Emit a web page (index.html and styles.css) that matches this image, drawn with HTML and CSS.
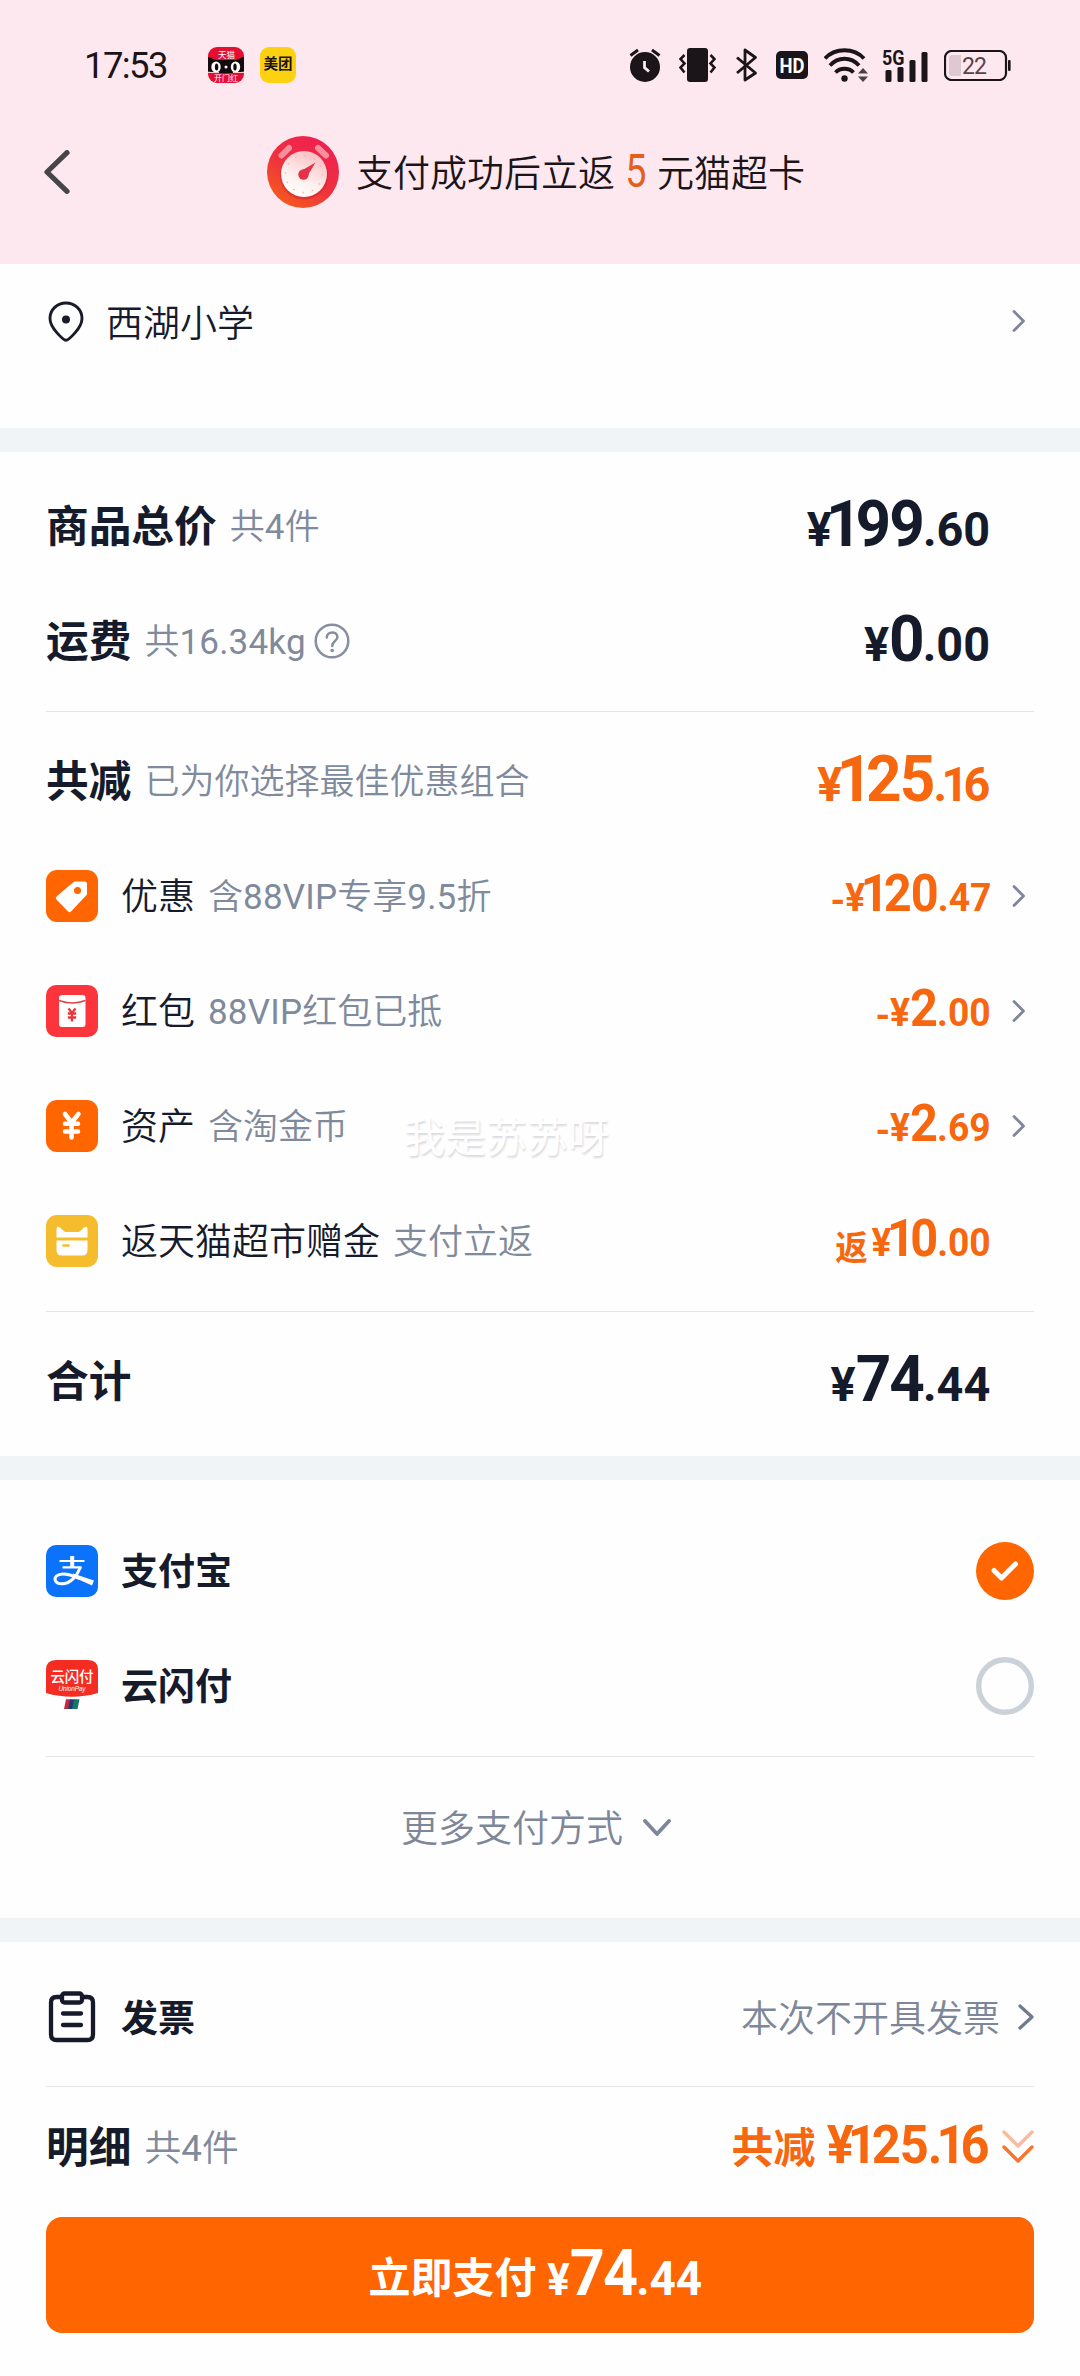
FILE: index.html
```html
<!DOCTYPE html>
<html lang="zh-CN">
<head>
<meta charset="utf-8">
<title>确认支付</title>
<link rel="stylesheet" href="styles.css">
</head>
<body>
<svg class="defs" width="0" height="0">
  <symbol id="chev" viewBox="0 0 14 22"><path d="M2 1.5 11.5 11 2 20.5" fill="none" stroke="#7d8799" stroke-width="2.8" stroke-linecap="round" stroke-linejoin="round"/></symbol>
</svg>
<header class="top">
  <div class="status">
    <span class="clock">17:53</span>
    <svg class="app" viewBox="0 0 36 36" width="36" height="36">
      <defs><clipPath id="tm"><rect width="36" height="36" rx="9"/></clipPath></defs>
      <g clip-path="url(#tm)">
        <rect width="36" height="36" fill="#e30f33"/>
        <path d="M0 10C3 10 5 13 9 13H27C31 13 33 10 36 10V24C26 27 10 27 0 24Z" fill="#120a0c"/>
        <ellipse cx="8" cy="20" rx="4.7" ry="5.6" fill="#fff"/><ellipse cx="8.6" cy="20" rx="1.7" ry="3.6" fill="#120a0c"/>
        <ellipse cx="27.5" cy="20" rx="4.7" ry="5.6" fill="#fff"/><ellipse cx="27" cy="20" rx="1.7" ry="3.6" fill="#120a0c"/>
        <circle cx="18" cy="20" r="1.5" fill="#fff"/>
        <path d="M0 25.5H11M25 25.5H36" stroke="#f6c9cf" stroke-width="1"/>
      </g>
      <text x="18.5" y="10.5" class="tiny" font-size="8.5">天猫</text>
      <text x="18" y="34" class="tiny" font-size="8">开门红</text>
    </svg>
    <span class="meituan">美团</span>
    <div class="signals">
      <svg class="s1" viewBox="629 47 32 34" width="32" height="34">
        <circle cx="645" cy="66" r="15" fill="#1b1418"/><path d="M630.500 54.500 638 49M659.500 54.500 652 49" stroke="#1b1418" stroke-width="3"/>
        <path d="M644.500 60v6.500l4.500 4" fill="none" stroke="#fde8ef" stroke-width="2.800"/>
      </svg>
      <svg class="s2" viewBox="679 47 37 34" width="37" height="34">
        <rect x="687" y="47" width="21" height="34" rx="3" fill="#1b1418"/>
        <path d="M684.500 54l-4 4 4 4.500-4 4 4 5M710.500 54l4 4-4 4.500 4 4-4 5" fill="none" stroke="#1b1418" stroke-width="2.600"/>
      </svg>
      <svg class="s3" viewBox="735 47 23 34" width="23" height="34">
        <path d="M737 56.500 755.500 72 745 79V49l10.500 7.500L737 72" fill="none" stroke="#1b1418" stroke-width="2.800" stroke-linejoin="round"/>
      </svg>
      <svg class="s4" viewBox="776 51 32 28" width="32" height="28">
        <rect x="776" y="51" width="32" height="28" rx="5" fill="#1b1418"/>
        <text x="792" y="72.500" text-anchor="middle" font-family="Roboto, sans-serif" font-weight="700" font-size="21" textLength="25" lengthAdjust="spacingAndGlyphs" fill="#fff">HD</text>
      </svg>
      <svg class="s5" viewBox="824 46 45 34" width="45" height="34">
        <g fill="none" stroke="#1b1418" stroke-width="3.800"><path d="M825 56.500C835 45.500 854 45.500 864 56.500"/><path d="M830 63.500C838 54.500 851 54.500 859 63.500"/><path d="M835.500 70.500C840 65.500 849 65.500 853.500 70.500"/></g>
        <circle cx="844.500" cy="76.500" r="3.200" fill="#1b1418"/>
        <path d="M863 66l5 5.500h-10zM863 80l5-5.500h-10z" fill="#4a4046"/>
      </svg>
      <svg class="s6" viewBox="879 38 50 49" width="50" height="49">
        <text x="882" y="61.500" font-family="Roboto, sans-serif" font-weight="700" font-size="20.500" textLength="22.500" lengthAdjust="spacingAndGlyphs" fill="#1b1418">5G</text>
        <g fill="#1b1418"><rect x="885.500" y="67" width="6" height="12" rx="1.500"/><rect x="897.500" y="64" width="6" height="15" rx="1.500"/><rect x="909.500" y="57" width="6" height="22" rx="1.500"/><rect x="921.500" y="49" width="6" height="30" rx="1.500"/></g>
      </svg>
      <svg class="s7" viewBox="944 49 67 31" width="67" height="31">
        <rect x="945" y="50" width="61" height="29" rx="6.500" fill="none" stroke="#1b1418" stroke-width="2.200"/>
        <path d="M949 57q0-3 3-3h9v21h-9q-3 0-3-3z" fill="#dfc8d1"/>
        <rect x="1008" y="59" width="2.600" height="11" rx="1" fill="#1b1418"/>
        <text x="974.500" y="72.800" text-anchor="middle" font-family="Roboto, sans-serif" font-size="23" textLength="25" fill="#54434c">22</text>
      </svg>
    </div>
  </div>
  <div class="nav">
    <svg class="back" viewBox="0 0 26 44" width="26" height="44"><path d="M23 2.700 3 22 23 41.300" fill="none" stroke="#45454a" stroke-width="5.200" stroke-linecap="round" stroke-linejoin="round"/></svg>
    <svg class="gauge" viewBox="0 0 72 72" width="72" height="72">
      <defs>
        <linearGradient id="g1" x1=".8" y1=".1" x2=".25" y2=".95"><stop offset="0" stop-color="#f0204f"/><stop offset=".5" stop-color="#ee3040"/><stop offset="1" stop-color="#f4581f"/></linearGradient>
        <linearGradient id="g2" x1=".8" y1="0" x2=".3" y2="1"><stop offset="0" stop-color="#fbb9bf"/><stop offset=".65" stop-color="#fdf1ee"/><stop offset="1" stop-color="#fff"/></linearGradient>
      </defs>
      <circle cx="36" cy="36" r="36" fill="url(#g1)"/>
      <circle cx="37" cy="39.500" r="24" fill="#c91d2c" opacity=".45"/>
      <path d="M14.500 19.500 22 12M51 12l8 7.500" stroke="#f98f9c" stroke-width="6" stroke-linecap="round"/>
      <circle cx="37" cy="38" r="23" fill="url(#g2)"/>
      <circle cx="37" cy="38" r="18.500" fill="none" stroke="#f0b9b4" stroke-width="1.500" stroke-dasharray="1.500 8.180"/>
      <path d="M48.500 26.500 33 35.500 39.500 41.500Z" fill="#e5314a"/><circle cx="36.500" cy="38.500" r="5.200" fill="#e5314a"/>
    </svg>
    <span class="title">支付成功后立返<span class="five"><i>5</i></span>元猫超卡</span>
  </div>
</header>

<section class="addr">
  <svg viewBox="0 0 36 42" width="36" height="42"><path d="M18 39.300C16 39.300 2 27.500 2 17.500 2 8.500 9.200 2 18 2S34 8.500 34 17.500C34 27.500 20 39.300 18 39.300Z" fill="none" stroke="#191b2b" stroke-width="2.900"/><circle cx="18" cy="18.500" r="4" fill="#191b2b"/></svg>
  <span class="text">西湖小学</span>
  <span class="trail"><svg width="14" height="22"><use href="#chev"/></svg></span>
</section>

<section class="sum">
  <div class="row"><b class="label">商品总价</b><span class="note">共<span class="num">4</span>件</span><span class="price big"><u>¥</u><b><i>1</i>99</b>.60</span><span class="trail"></span></div>
  <div class="row"><b class="label">运费</b><span class="note">共<span class="num">16.34kg</span></span>
    <svg class="help" viewBox="0 0 36 36" width="36" height="36"><circle cx="18" cy="18" r="16.300" fill="none" stroke="#868f9f" stroke-width="2.500"/><path d="M12.800 14.500C12.800 7.500 23.400 8 23.400 14 23.400 18 18.200 18 18.200 23" fill="none" stroke="#868f9f" stroke-width="2.500" stroke-linecap="round"/><circle cx="18.200" cy="27.500" r="1.800" fill="#868f9f"/></svg>
    <span class="price big">¥<b>0</b>.00</span><span class="trail"></span></div>
  <hr>
  <div class="row"><b class="label">共减</b><span class="note">已为你选择最佳优惠组合</span><span class="price big hot"><u>¥</u><b><i>1</i>25</b><u>.</u><i>1</i>6</span><span class="trail"></span></div>
  <div class="row item">
    <svg class="ico" viewBox="0 0 52 52" width="52" height="52"><rect width="52" height="52" rx="11" fill="#ff6500"/><path d="M29.500 11.500H38.500Q41 11.500 41 14V24.500L25 41.500Q23.500 43 22 41.500L10.500 29.500Q9 28 10.500 26.500L27 12.500Q28 11.500 29.500 11.500Z" fill="#fff"/><circle cx="31.500" cy="20.500" r="3.500" fill="#ff6500"/></svg>
    <span class="text">优惠</span><span class="note">含<span class="num">88VIP</span>专享<span class="num">9.5</span>折</span><span class="price mid hot"><em>-</em><u>¥</u><b><i>1</i>20</b>.47</span><span class="trail"><svg width="14" height="22"><use href="#chev"/></svg></span></div>
  <div class="row item">
    <svg class="ico" viewBox="0 0 52 52" width="52" height="52"><rect width="52" height="52" rx="10" fill="#fc353c"/><rect x="13" y="10" width="26.500" height="32" rx="3" fill="#fff"/><path d="M13 15.500Q26 20.500 39.500 15.500" fill="none" stroke="#d94a4d" stroke-width="1.500"/><path d="M22.500 23.500 26 28 29.500 23.500M26 28V36.500M21.800 28.500H30.200M21.800 32.500H30.200" fill="none" stroke="#e8363c" stroke-width="2.300"/></svg>
    <span class="text">红包</span><span class="note"><span class="num">88VIP</span>红包已抵</span><span class="price mid hot"><em>-</em>¥<b>2</b>.00</span><span class="trail"><svg width="14" height="22"><use href="#chev"/></svg></span></div>
  <div class="row item">
    <svg class="ico" viewBox="0 0 52 52" width="52" height="52"><rect width="52" height="52" rx="11" fill="#ff6500"/><path d="M19 14 25.500 22.500 32.500 14M25.500 23V37.500M19 23.800H32M19 31.500H32" fill="none" stroke="#fff" stroke-width="4.600" stroke-linecap="round"/></svg>
    <span class="text">资产</span><span class="note">含淘金币</span><span class="price mid hot"><em>-</em>¥<b>2</b>.69</span><span class="trail"><svg width="14" height="22"><use href="#chev"/></svg></span>
    <span class="mark">我是苏苏呀</span></div>
  <div class="row item">
    <svg class="ico" viewBox="0 0 52 52" width="52" height="52"><rect width="52" height="52" rx="11" fill="#f5bd2e"/><path d="M10.500 22.500V14Q10.500 10.500 14 12.500L19 17H33L38 12.500Q41.500 10.500 41.500 14V22.500Z" fill="#fff"/><path d="M10.500 25.500H41.500V35Q41.500 40.500 36 40.500H16Q10.500 40.500 10.500 35Z" fill="#fff"/><path d="M17.500 30.500H22.500" stroke="#f5bd2e" stroke-width="2.600" stroke-linecap="round"/></svg>
    <span class="text">返天猫超市赠金</span><span class="note">支付立返</span><span class="price mid hot"><small>返</small><u>¥</u><b><i>1</i>0</b>.00</span><span class="trail"></span></div>
  <hr>
  <div class="row"><b class="label">合计</b><span class="price big">¥<b>74</b>.44</span><span class="trail"></span></div>
</section>

<section class="pay">
  <div class="row item">
    <svg class="ico" viewBox="0 0 52 52" width="52" height="52"><rect width="52" height="52" rx="10" fill="#0a72fb"/><g fill="none" stroke="#fff"><path d="M13.500 16H38.500M16.500 22.300H35.500" stroke-width="2.200"/><path d="M26.200 11V22" stroke-width="4"/><path d="M34.500 22C31.500 30 25 38.800 16 38.800 9 38.800 7.500 34 10.500 31 15 26.500 25 30 34 33.500" stroke-width="3"/></g><path d="M27 28.500 33 30.500 48 35.500 46 40.500 27 32Z" fill="#fff"/></svg>
    <b class="text">支付宝</b>
    <svg class="radio" viewBox="0 0 58 58" width="58" height="58"><circle cx="29" cy="29" r="29" fill="#ff6500"/><path d="M18 28.500 25.500 36 39.500 22" fill="none" stroke="#fff" stroke-width="5" stroke-linecap="round" stroke-linejoin="round"/></svg>
  </div>
  <div class="row item">
    <svg class="ico" viewBox="0 0 52 52" width="52" height="52"><path d="M0 10Q0 0 10 0H42Q52 0 52 10V33Q26 40.500 0 33Z" fill="#f52c22"/>
      <text x="26" y="21.500" text-anchor="middle" font-family="Noto Sans CJK SC, sans-serif" font-weight="500" font-size="14.500" textLength="43" fill="#fff">云闪付</text>
      <text x="26" y="30.500" text-anchor="middle" font-family="Liberation Sans, sans-serif" font-style="italic" font-size="6.500" textLength="27" fill="#fff">UnionPay</text>
      <path d="M20 39.300h5l-2 9.700h-5z" fill="#c22b3f"/><path d="M24 39.300h5l-2 9.700h-5z" fill="#243a72"/><path d="M28 39.300h5.500l-2 9.700h-5.500z" fill="#16736f"/></svg>
    <b class="text">云闪付</b>
    <svg class="radio" viewBox="0 0 58 58" width="58" height="58"><circle cx="29" cy="29" r="26.300" fill="none" stroke="#cbd1d9" stroke-width="5.400"/></svg>
  </div>
  <hr>
  <div class="more"><span>更多支付方式</span><svg viewBox="0 0 28 18" width="28" height="18"><path d="M2 2 14 15 26 2" fill="none" stroke="#7d8799" stroke-width="3.800" stroke-linecap="round" stroke-linejoin="round"/></svg></div>
</section>

<section class="foot">
  <div class="row item invoice">
    <svg class="ico" viewBox="0 0 52 52" width="52" height="52"><g fill="none" stroke="#161a2b" stroke-width="4.300" stroke-linecap="round" stroke-linejoin="round"><path d="M14 6H10.500Q5 6 5 11.500V43.500Q5 49 10.500 49H41.500Q47 49 47 43.500V11.500Q47 6 41.500 6H38"/><rect x="16" y="2.500" width="20" height="9" rx="2.500"/><path d="M17 22.500H35M17 34H35"/></g></svg>
    <b class="text">发票</b><span class="choice">本次不开具发票</span><svg class="go" viewBox="0 0 16 26" width="16" height="26"><path d="M2 2 14 13 2 24" fill="none" stroke="#6f7a90" stroke-width="3.200" stroke-linecap="round" stroke-linejoin="round"/></svg>
  </div>
  <hr>
  <div class="row detail"><b class="label">明细</b><span class="note">共<span class="num">4</span>件</span><b class="saved">共减</b><span class="price flat hot"><u>¥</u><i>1</i>25<u>.</u><i>1</i>6</span>
    <svg class="down" viewBox="0 0 32 34" width="32" height="34"><g fill="none" stroke-width="3.400" stroke-linecap="round" stroke-linejoin="round"><path d="M2 2 16 16 30 2" stroke="#fcb9a0"/><path d="M2 17 16 31 30 17" stroke="#f4762f"/></g></svg></div>
  <button class="submit"><span>立即支付</span><span class="price cta"><small>¥</small><b>74</b>.44</span></button>
</section>
</body>
</html>
```
FILE: styles.css
```css
* { box-sizing: border-box; }
body {
  margin: 0;
  width: 1080px;
  min-height: 2376px;
  background: #fefefe;
  color: #161b2c;
  font-family: Roboto, "Noto Sans CJK SC", sans-serif;
  font-size: 37px;
  line-height: 1.2;
  white-space: nowrap;
}
svg { display: block; flex: none; }
.defs { position: absolute; }
b { font-weight: 700; }
i, em { font-style: normal; }
u { text-decoration: none; }

.top { height: 264px; background: #fde8ef; color: #1b1418; padding-top: 46px; }
.status { display: flex; align-items: center; height: 38px; padding: 0 69px 0 84px; }
.clock { width: 124px; padding-top: 1px; font-size: 36.5px; letter-spacing: -1.6px; }
.meituan {
  width: 36px; height: 36px; margin-left: 16px; border-radius: 9px;
  background: #fbd110; font-size: 14.5px; font-weight: 700;
  display: flex; align-items: center; justify-content: center;
}
.tiny { fill: #fff; text-anchor: middle; font-family: "Noto Sans CJK SC", sans-serif; }
.signals { margin-left: auto; display: flex; align-items: center; }
.s2 { margin-left: 18px; }
.s3 { margin-left: 19px; }
.s4 { margin-left: 18px; }
.s5 { margin-left: 16px; }
.s6 { margin-left: 10px; }
.s7 { margin-left: 15px; }

.nav { display: flex; align-items: center; height: 72px; margin-top: 52px; padding-left: 44px; }
.gauge { margin-left: 197px; }
.title { display: flex; align-items: center; margin-left: 17px; padding-top: 6px; font-weight: 350; }
.five { display: flex; justify-content: center; width: 42px; color: #e2601b; font-size: 46px; line-height: 1; font-weight: 400; padding-bottom: 9px; }
.five i { transform: scaleX(.82); }

section + section { border-top: 24px solid #f0f4f7; }
.addr { height: 164px; padding: 37px 0 0 48px; display: flex; align-items: flex-start; }
.addr .text { margin-left: 22px; padding-top: 2px; line-height: 44px; font-weight: 350; }
.addr .trail { margin-left: auto; margin-right: 46px; height: 40px; }

.sum { padding: 16px 46px 18px; }
.pay { padding: 33px 46px 0; height: 462px; }
.foot { padding: 6px 46px 0; }
hr { border: 0; height: 1px; margin: 13px 0 11px; background: #e3e5e9; }
.row { position: relative; display: flex; align-items: center; height: 115px; }
.label { font-size: 42.7px; padding-top: 4px; }
.note { margin-left: 13px; padding-top: 4px; font-size: 35px; color: #7f8a9c; font-weight: 350; }
.num { font-weight: 400; letter-spacing: .2px; }
.help { margin-left: 8px; }
.item .text { margin-left: 23px; padding-top: 5px; }
.item span.text { font-weight: 350; }

.price { margin-left: auto; font-weight: 700; line-height: 1; padding-bottom: 3px; transform: scaleX(.955); transform-origin: 100% 50%; }
/* the figure 1 is set tight on both sides */
.price i { letter-spacing: -.1em; }
.price u { letter-spacing: -.12em; }
.price em { vertical-align: -3px; }
.big { font-size: 49px; margin-right: -2px; }
.big b { font-size: 65px; letter-spacing: -2px; }
.mid { font-size: 39px; margin-right: -3px; }
.mid b { font-size: 51px; letter-spacing: -1px; }
.mid small { font-size: 34px; vertical-align: -4px; margin-right: 4px; }
.hot, .saved { color: #f6670f; }
.trail { width: 46px; flex: none; display: flex; align-items: center; padding-left: 24px; }
.mark {
  position: absolute; left: 358px; top: 46px; font-size: 41px; font-weight: 400;
  color: #fff; text-shadow: 1px 2px 2px #dadadf;
}

.radio { margin-left: auto; }
.more { display: flex; justify-content: center; align-items: center; gap: 20px; margin-top: -11px; height: 142px; padding-right: 8px; color: #7d8799; font-weight: 350; }
.more span { padding-top: 4px; }

.invoice { height: 138px; }
.invoice .text { padding-top: 6px; }
.choice { margin-left: auto; margin-right: 18px; padding-top: 6px; color: #7d8799; font-weight: 350; }
.invoice + hr { margin: 0; }
.detail { height: 120px; margin-bottom: 10px; }
.detail .note { font-size: 36.8px; }
.saved { margin-left: auto; padding-top: 5px; font-size: 42px; }
.flat { margin-left: 4px; font-size: 53px; letter-spacing: -1px; }
.down { margin-left: 13px; }
.submit {
  display: flex; align-items: center; justify-content: center; width: 100%; height: 116px;
  border: 0; border-radius: 16px; padding: 0 9px 0 0; background: #ff6500; color: #fff;
  font: 700 42px/1.2 Roboto, "Noto Sans CJK SC", sans-serif;
}
.submit span:first-child { padding-top: 8px; }
.cta { margin-left: 4px; font-size: 48px; }
.cta b { font-size: 64px; letter-spacing: -2px; }
.cta small { font-size: 44px; }
```
